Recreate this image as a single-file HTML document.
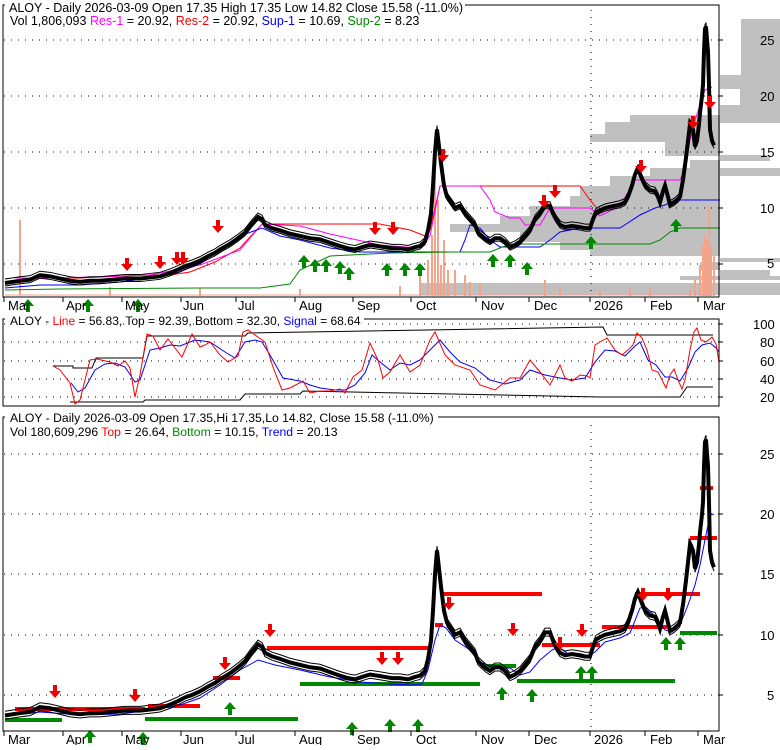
<!DOCTYPE html>
<html><head><meta charset="utf-8"><style>
body{margin:0;background:#fff;width:780px;height:745px;overflow:hidden;font-family:"Liberation Sans",sans-serif}
svg text{font-family:"Liberation Sans",sans-serif}
</style></head><body>
<svg width="780" height="745" xmlns="http://www.w3.org/2000/svg" font-size="13">
<defs>
<polyline id="px" fill="none" vector-effect="non-scaling-stroke" points="5,3.3 20,3.5 30,3.6 40,4 50,3.9 60,3.7 70,3.5 80,3.4 90,3.5 100,3.5 112,3.6 125,3.7 140,3.7 150,3.8 160,3.9 170,4.2 178,4.5 185,4.8 192,5 200,5.3 208,5.7 215,6 222,6.4 230,6.8 238,7.3 245,7.8 252,8.6 258,9.2 262,9 265,8.5 272,8.2 280,8 290,7.7 300,7.5 310,7.3 320,7.2 330,6.9 340,6.6 348,6.4 355,6.3 362,6.5 370,6.7 378,6.6 385,6.5 392,6.4 400,6.4 408,6.3 415,6.5 420,6.6 425,7 428,8 431,9.5 433,12 435,15 437,17 439,15.5 441,14 444,12 447,11 451,10.5 455,10 460,10.2 465,9.5 470,9 475,8.5 478,7.8 482,7.5 486,7.2 490,7 495,7.3 500,7.3 505,7 510,6.5 515,6.7 520,7 525,7.5 530,8 535,9 540,9.5 545,10.2 550,10.2 553,9.5 556,9 560,8.5 565,8.3 572,8.4 580,8.3 585,8.2 590,8.2 593,9 596,9.6 600,9.8 605,10 610,10.1 615,10.2 620,10.3 625,10.5 628,11 632,12 635,13 638,13.5 641,12.8 645,12 650,11.6 655,11.5 658,11 660,10.5 663,11.5 665,12 668,11 670,10.3 674,10.5 678,10.8 680,11 683,12.5 686,14.5 688,16 690,17.5 693,17 695,15.5 697,16 699,17.5 700,18.5 702,20 703,21 704,24 705,26 706,26.2 707,25 708,24 709,21 710,17 712,16 714,15.6"/>
<path id="dn" d="M-2 -12h4v6h4l-6 7-6-7h4z"/>
<path id="up" d="M-2 12h4v-6h4l-6-7-6 7h4z"/>
</defs>
<rect width="780" height="745" fill="#fff"/>

<!-- TOP PANEL -->
<g fill="#c0c0c0">
<rect x="741" y="19" width="39" height="57"/>
<rect x="720" y="75" width="60" height="14"/>
<rect x="740" y="88" width="40" height="20"/>
<rect x="720" y="105" width="60" height="10"/>
<rect x="630" y="115" width="150" height="8"/>
<rect x="605" y="122" width="115" height="12"/>
<rect x="590" y="134" width="130" height="8"/>
<rect x="665" y="142" width="55" height="14"/>
<rect x="720" y="155" width="50" height="6"/>
<rect x="690" y="160" width="30" height="8"/>
<rect x="650" y="168" width="130" height="8"/>
<rect x="610" y="176" width="110" height="10"/>
<rect x="580" y="186" width="140" height="10"/>
<rect x="570" y="196" width="150" height="10"/>
<rect x="530" y="206" width="190" height="10"/>
<rect x="500" y="216" width="220" height="10"/>
<rect x="450" y="224" width="270" height="8"/>
<rect x="520" y="232" width="200" height="10"/>
<rect x="560" y="242" width="160" height="8"/>
<rect x="590" y="250" width="130" height="6"/>
<rect x="720" y="258" width="60" height="4"/>
<rect x="700" y="262" width="20" height="8"/>
<rect x="720" y="270" width="50" height="8"/>
<rect x="680" y="276" width="100" height="4"/>
<rect x="420" y="283" width="360" height="12"/>
</g>
<g stroke="#000" stroke-dasharray="1,6" stroke-width="1">
<line x1="4" y1="40" x2="719" y2="40"/><line x1="4" y1="96" x2="719" y2="96"/><line x1="4" y1="152" x2="719" y2="152"/><line x1="4" y1="208" x2="719" y2="208"/><line x1="4" y1="264" x2="719" y2="264"/>
<line x1="591" y1="10" x2="591" y2="296"/>
</g>
<g stroke="#f4a48a" stroke-width="2">
<path d="M20 295V220M110 296V287M200 296V288M300 296V289M400 296V286M420 296V265M428 296V260M432 296V235M435 296V150M438 296V200M441 296V265M444 296V240M448 296V270M455 296V270M465 296V275M470 296V282M480 296V283M545 296V280M560 296V288M600 296V290M630 296V288M650 296V287M690 296V290M695 296V280M700 296V265M703 296V245M705 296V235M707 296V240M709 296V205M711 296V245M714 296V255"/>
</g>
<g stroke="#f4a48a" stroke-width="1"><line x1="5" y1="295" x2="715" y2="295"/></g>
<g fill="none" stroke-width="1">
<polyline stroke="#f00" points="15,278 60,278 80,278 100,277 150,275 170,275 190,272 215,262 240,248 262,224 380,224 410,230 425,236 430,230 440,186 580,186 590,200 600,212"/>
<polyline stroke="#f0f" points="15,278 60,278 150,275 200,265 240,250 262,224 300,226 330,234 380,245 420,248 430,236 440,186 480,186 490,200 495,212 510,218 520,218 525,225 540,225 550,208 590,208 600,216 620,206 635,180 650,180 680,180 685,168 690,140 695,120 700,105 705,90 712,87"/>
<polyline stroke="#00f" points="5,288 40,285 80,285 120,282 150,278 180,272 200,263 220,250 240,236 262,228 280,236 300,240 330,248 360,252 390,252 420,252 460,252 465,240 470,225 480,228 490,240 500,247 515,247 540,247 550,240 560,232 580,228 620,228 640,215 655,208 665,205 675,200 720,200"/>
<polyline stroke="#080" points="5,290 60,289 200,288 260,288 290,284 300,270 330,256 390,253 450,252 490,252 500,248 510,244 555,244 650,244 660,240 670,232 680,228 720,228"/>
</g>
<g transform="matrix(1,0,0,-11.2,0,320)"><use href="#px" stroke="#000" stroke-width="4"/></g>
<g transform="matrix(1,0,0,-11.2,0,323)"><use href="#px" stroke="#000" stroke-width="1"/></g>
<g transform="matrix(1,0,0,-11.2,0,316)"><use href="#px" stroke="#000" stroke-width="1"/></g>
<g fill="#e00">
<use href="#dn" x="127" y="270"/><use href="#dn" x="160" y="268"/><use href="#dn" x="177" y="264"/><use href="#dn" x="183" y="264"/><use href="#dn" x="218" y="232"/><use href="#dn" x="375" y="234"/><use href="#dn" x="393" y="234"/><use href="#dn" x="443" y="161"/><use href="#dn" x="544" y="207"/><use href="#dn" x="555" y="197"/><use href="#dn" x="641" y="172"/><use href="#dn" x="693" y="128"/><use href="#dn" x="710" y="108"/>
</g>
<g fill="#080">
<use href="#up" x="28" y="300"/><use href="#up" x="88" y="300"/><use href="#up" x="138" y="300"/><use href="#up" x="304" y="256"/><use href="#up" x="315" y="260"/><use href="#up" x="326" y="260"/><use href="#up" x="340" y="262"/><use href="#up" x="349" y="268"/><use href="#up" x="387" y="264"/><use href="#up" x="405" y="264"/><use href="#up" x="420" y="264"/><use href="#up" x="493" y="255"/><use href="#up" x="510" y="255"/><use href="#up" x="527" y="263"/><use href="#up" x="591" y="237"/><use href="#up" x="676" y="220"/>
</g>
<path d="M465 5H719V297H3V5h2" fill="none" stroke="#000"/>
<text x="9" y="12" font-size="12.5">ALOY - Daily 2026-03-09 Open 17.35  High 17.35  Low 14.82  Close 15.58 (-11.0%)</text>
<text x="10" y="25" font-size="12.5">Vol 1,806,093 <tspan fill="#f0f">Res-1</tspan> = 20.92, <tspan fill="#f00">Res-2</tspan> = 20.92, <tspan fill="#00f">Sup-1</tspan> = 10.69, <tspan fill="#080">Sup-2</tspan> = 8.23</text>
<g stroke="#000"><path d="M719 40h4M719 96h4M719 152h4M719 208h4M719 264h4"/></g>
<g><text x="760" y="45">25</text><text x="760" y="101">20</text><text x="760" y="157">15</text><text x="760" y="213">10</text><text x="767" y="268">5</text></g>
<g stroke="#000"><path d="M4 297v5M63 297v5M122 297v5M181 297v5M236 297v5M295 297v5M353 297v5M411 297v5M476 297v5M529 297v5M590 297v5M645 297v5M698 297v5"/></g>
<g><text x="8" y="310">Mar</text><text x="66" y="310">Apr</text><text x="125" y="310">May</text><text x="183" y="310">Jun</text><text x="238" y="310">Jul</text><text x="299" y="310">Aug</text><text x="357" y="310">Sep</text><text x="416" y="310">Oct</text><text x="481" y="310">Nov</text><text x="534" y="310">Dec</text><text x="594" y="310">2026</text><text x="650" y="310">Feb</text><text x="703" y="310">Mar</text></g>

<!-- PANEL 2 -->
<g stroke="#000" stroke-dasharray="1,6"><path d="M4 324H719M4 342H719M4 361H719M4 379H719M4 397H719"/></g>
<g fill="none" stroke="#000">
<polyline points="53,366 73,366 73,368 92,368 96,358 143,358 147,336 245,336 248,333 603,327 607,335 713,335"/>
<polyline points="70,402 143,402 145,400 240,400 245,394 300,394 303,391 600,397 680,397 687,387 713,387"/>
</g>
<polyline fill="none" stroke="#00f" points="71,383 78,392 85,388 95,370 105,364 115,363 125,367 135,382 140,380 150,350 160,348 170,345 180,346 195,340 210,342 225,352 235,358 245,342 255,340 262,342 270,355 283,378 300,381 310,385 320,388 335,390 345,390 355,385 365,373 372,355 380,362 390,370 400,363 410,365 420,360 430,350 440,340 450,352 460,362 475,368 490,380 505,384 520,380 530,370 545,375 560,378 572,380 585,378 595,362 605,350 615,351 625,356 635,346 640,342 648,360 656,365 665,377 672,377 680,381 688,368 695,352 702,345 710,343 716,348 719,352"/>
<polyline fill="none" stroke="#f00" points="53,366 60,370 70,383 75,404 80,400 90,360 97,359 110,362 118,366 125,361 130,368 135,397 140,375 147,334 153,336 160,350 168,339 175,348 182,357 192,334 200,347 205,345 210,342 220,355 228,362 238,356 243,332 248,330 265,342 273,367 282,390 290,388 303,381 310,393 320,391 330,391 340,389 345,393 353,377 362,370 370,343 378,360 383,378 390,372 400,355 410,372 420,365 430,340 435,332 445,355 455,365 470,370 480,385 495,390 510,378 520,378 530,360 540,372 550,385 560,365 565,378 572,381 580,375 587,376 590,378 595,345 600,342 607,338 615,350 622,355 628,350 633,345 637,333 642,338 647,350 652,370 658,372 663,382 666,388 670,375 674,369 678,380 682,389 685,380 690,350 694,332 697,328 701,340 706,342 712,337 716,344 719,362"/>
<path d="M364 319H719V406H3V319h2" fill="none" stroke="#000"/>
<text x="10" y="325" font-size="12" style="paint-order:stroke" stroke="#fff" stroke-width="3">ALOY - <tspan fill="#f00" stroke="#fff">Line</tspan> = 56.83, Top = 92.39, Bottom = 32.30, <tspan fill="#00f" stroke="#fff">Signal</tspan> = 68.64</text>
<g stroke="#000"><path d="M719 324h4M719 342h4M719 361h4M719 379h4M719 397h4"/></g>
<g><text x="753" y="329">100</text><text x="760" y="347">80</text><text x="760" y="366">60</text><text x="760" y="384">40</text><text x="760" y="402">20</text></g>

<!-- PANEL 3 -->
<g stroke="#000" stroke-dasharray="1,6"><path d="M4 454H719M4 514H719M4 574H719M4 635H719M4 695H719M591 425V731"/></g>
<g stroke-width="4" fill="none">
<path stroke="#f00" d="M15 709H145M148 706H200M213 678H240M267 648H430M435 625H443M443 594H542M542 645H600M602 627H667M635 594H700M690 538H717M700 488H713"/>
<path stroke="#080" d="M5 720H62M145 719H298M300 684H480M420 684H480M481 666H516M517 681H675M680 633H717"/>
</g>
<polyline fill="none" stroke="#00f" points="5,716 40,712 80,715 120,714 150,710 180,705 200,698 220,685 240,670 258,660 275,665 300,670 330,677 360,682 390,684 410,685 422,684 428,670 435,640 440,625 446,628 455,640 470,650 480,662 495,668 510,668 520,675 530,672 540,660 552,650 558,647 570,655 585,658 595,652 605,642 620,638 630,633 640,608 645,607 655,616 665,630 672,632 680,625 688,605 695,585 700,565 705,540 710,515 714,514"/>
<g transform="matrix(1,0,0,-12.05,0,755.25)"><use href="#px" stroke="#000" stroke-width="4"/></g>
<g transform="matrix(1,0,0,-12.05,0,759)"><use href="#px" stroke="#000" stroke-width="1"/></g>
<g transform="matrix(1,0,0,-12.05,0,751)"><use href="#px" stroke="#000" stroke-width="1"/></g>
<g fill="#e00">
<use href="#dn" x="55" y="697"/><use href="#dn" x="135" y="701"/><use href="#dn" x="225" y="669"/><use href="#dn" x="270" y="636"/><use href="#dn" x="382" y="664"/><use href="#dn" x="398" y="664"/><use href="#dn" x="449" y="609"/><use href="#dn" x="513" y="635"/><use href="#dn" x="560" y="649"/><use href="#dn" x="582" y="636"/><use href="#dn" x="643" y="600"/><use href="#dn" x="668" y="600"/>
</g>
<g fill="#080">
<use href="#up" x="90" y="731"/><use href="#up" x="143" y="733"/><use href="#up" x="230" y="703"/><use href="#up" x="352" y="723"/><use href="#up" x="390" y="720"/><use href="#up" x="418" y="720"/><use href="#up" x="502" y="688"/><use href="#up" x="532" y="690"/><use href="#up" x="581" y="667"/><use href="#up" x="592" y="667"/><use href="#up" x="666" y="638"/><use href="#up" x="680" y="638"/>
</g>
<path d="M438 417H719V731H3V417h2" fill="none" stroke="#000"/>
<text x="10" y="422" font-size="12.2">ALOY - Daily 2026-03-09 Open 17.35,Hi 17.35,Lo 14.82, Close 15.58 (-11.0%)</text>
<text x="10" y="436" font-size="12.2">Vol 180,609,296 <tspan fill="#f00">Top</tspan> = 26.64, <tspan fill="#080">Bottom</tspan> = 10.15, <tspan fill="#00f">Trend</tspan> = 20.13</text>
<g stroke="#000"><path d="M719 454h4M719 514h4M719 574h4M719 635h4M719 695h4"/></g>
<g><text x="760" y="459">25</text><text x="760" y="519">20</text><text x="760" y="579">15</text><text x="760" y="640">10</text><text x="767" y="700">5</text></g>
<g stroke="#000"><path d="M4 731v5M63 731v5M122 731v5M181 731v5M236 731v5M295 731v5M353 731v5M411 731v5M476 731v5M529 731v5M590 731v5M645 731v5M698 731v5"/></g>
<g><text x="8" y="744">Mar</text><text x="66" y="744">Apr</text><text x="125" y="744">May</text><text x="183" y="744">Jun</text><text x="238" y="744">Jul</text><text x="299" y="744">Aug</text><text x="357" y="744">Sep</text><text x="416" y="744">Oct</text><text x="481" y="744">Nov</text><text x="534" y="744">Dec</text><text x="594" y="744">2026</text><text x="650" y="744">Feb</text><text x="703" y="744">Mar</text></g>
</svg>
</body></html>
